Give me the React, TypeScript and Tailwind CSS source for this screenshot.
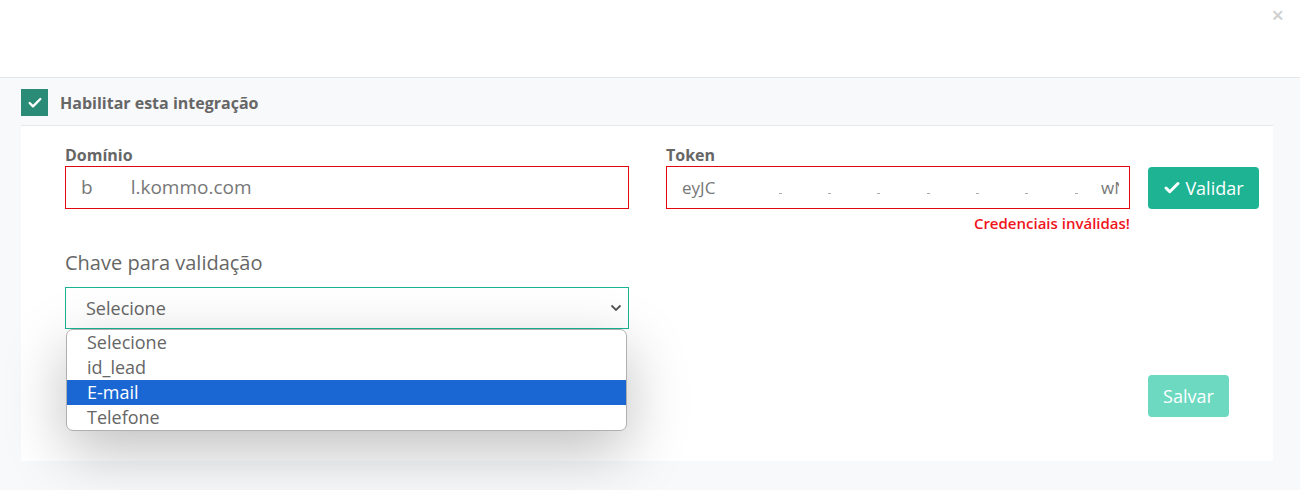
import { Check } from "lucide-react";

const options = ["Selecione", "id_lead", "E-mail", "Telefone"];

// Token field: only the ends of the value are visible, the middle is blanked out.
function TokenValue() {
  return (
    <div className="flex h-full w-full items-center overflow-hidden whitespace-nowrap pl-[15px] pr-[10px] text-[17px] text-[#777]">
      <span>eyJC</span>
      <span className="flex flex-1 items-end justify-around self-stretch pb-[14px] pl-[40px]">
        {[0, 1, 2, 3, 4, 5, 6].map((i) => (
          <span key={i} className="h-[1px] w-[3px] bg-[#aaa]" />
        ))}
      </span>
      <span className="w-[18px] overflow-hidden">wN</span>
    </div>
  );
}

export default function App() {
  return (
    <div className="h-[490px] w-[1300px] overflow-hidden bg-[#f8f9fb] font-['Open_Sans',sans-serif]">
      <header className="flex h-[78px] items-start justify-end border-b border-[#e4e6ea] bg-white pr-[16px] pt-[3px]">
        <span className="text-[22px] font-semibold leading-none text-[#cfcfcf]">×</span>
      </header>

      <div className="pl-[21px] pr-[27px]">
        <label className="flex h-[48px] items-center gap-[12px] border-b border-[#e6e8eb] pt-[2px]">
          <span className="flex h-[27px] w-[27px] items-center justify-center bg-[#2a8c76]">
            <Check size={16} strokeWidth={3.5} className="text-white" />
          </span>
          <span className="text-[16px] font-bold text-[#666]">Habilitar esta integração</span>
        </label>

        <div className="h-[335px] bg-white pl-[44px] pt-[18px]">
          <div className="flex items-start">
            <div className="w-[564px]">
              <div className="text-[16px] font-bold leading-[22px] text-[#666]">Domínio</div>
              <div className="flex h-[43px] items-center border border-[#e0080e] pl-[15px] text-[19px] text-[#777]">
                <span>b</span>
                <span className="ml-[38px]">l.kommo.com</span>
              </div>
            </div>

            <div className="ml-[37px] w-[464px]">
              <div className="text-[16px] font-bold leading-[22px] text-[#666]">Token</div>
              <div className="h-[43px] border border-[#e0080e]">
                <TokenValue />
              </div>
              <div className="mt-[4px] text-right text-[15px] font-semibold leading-[20px] text-[#f0141c]">
                Credenciais inválidas!
              </div>
            </div>

            <button className="ml-[18px] mt-[23px] flex h-[42px] w-[111px] items-center justify-center gap-[4px] rounded-[4px] bg-[#1db393] text-[18px] text-white">
              <Check size={18} strokeWidth={4} />
              Validar
            </button>
          </div>

          <div className="flex items-start">
            <div className="relative mt-[16px] w-[564px]">
              <div className="text-[20px] font-medium leading-[28px] text-[#666]">Chave para validação</div>
              <div className="mt-[10px] flex h-[42px] items-center justify-between border border-[#1ab394] pl-[20px] pr-[6px] text-[18px] text-[#666]">
                <span>Selecione</span>
                <svg width="12" height="8" viewBox="0 0 12 8" fill="none" stroke="#555" strokeWidth="1.8">
                  <path d="M1.5 1.5 6 6l4.5-4.5" />
                </svg>
              </div>

              <ul className="absolute left-[1px] right-[2px] top-[80px] z-10 overflow-hidden rounded-[7px] border border-[#b0b0b0] bg-white shadow-[0_20px_60px_rgba(0,0,0,0.25)]">
                {options.map((o) => (
                  <li
                    key={o}
                    className={`h-[25px] pl-[20px] text-[18px] leading-[24px] ${
                      o === "E-mail" ? "bg-[#1a67d3] text-white" : "text-[#666]"
                    }`}
                  >
                    {o}
                  </li>
                ))}
              </ul>
            </div>

            <button className="ml-[519px] mt-[142px] h-[42px] w-[81px] rounded-[4px] bg-[#6ed9c1] text-[18px] text-white">
              Salvar
            </button>
          </div>
        </div>
      </div>
    </div>
  );
}
